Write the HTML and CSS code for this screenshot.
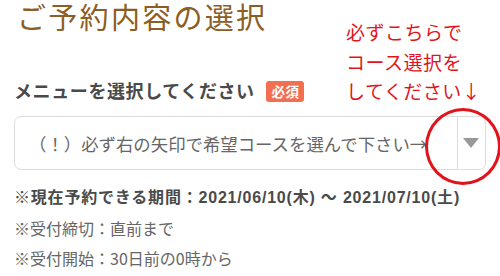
FILE: index.html
```html
<!DOCTYPE html>
<html lang="ja">
  <head>
    <meta charset="UTF-8" />
    <title>ご予約内容の選択</title>
    <link rel="stylesheet" href="styles.css">
  </head>
  <body>
    <div class="page">
      <h1 class="title">ご予約内容の選択</h1>

      <div class="note-hand">
        必ずこちらで<br />
        コース選択を<br />
        してください↓
      </div>

      <div class="form-group">
        <div class="label">
          メニューを選択してください <span class="required">必須</span>
        </div>
        <div class="select">
          <span class="select-text">（！）必ず右の矢印で希望コースを選んで下さい→</span>
          <span class="select-arrow"><span class="triangle"></span></span>
        </div>
        <div class="circle"></div>
      </div>

      <p class="period">※現在予約できる期間：2021/06/10(木) ～ 2021/07/10(土)</p>
      <p class="info">※受付締切：直前まで</p>
      <p class="info">※受付開始：30日前の0時から</p>
    </div>
  </body>
</html>
```

FILE: styles.css
```css
body {
  margin: 0;
  background: #fff;
  font-family: "Noto Sans CJK JP", "Noto Sans", sans-serif;
  color: #444;
}
.page {
  position: relative;
  width: 500px;
  height: 276px;
  overflow: hidden;
  padding: 0 14px;
  box-sizing: border-box;
}
.title {
  margin: 0;
  padding-left: 3px;
  font-size: 29px;
  font-weight: normal;
  line-height: 32px;
  color: #8c5d24;
  letter-spacing: 2.3px;
}
.note-hand {
  position: absolute;
  left: 346px;
  top: 17px;
  font-size: 19px;
  line-height: 29.5px;
  color: #e1141b;
  letter-spacing: 0.5px;
}
.form-group {
  position: relative;
  margin-top: 45px;
}
.label {
  font-size: 18px;
  font-weight: bold;
  line-height: 26px;
  color: #4a4a4a;
  letter-spacing: 0.6px;
}
.required {
  display: inline-block;
  margin-left: 7px;
  padding: 0 5px;
  background: #f36f50;
  color: #fff;
  font-size: 13.5px;
  line-height: 21px;
  border-radius: 3px;
  vertical-align: 1px;
  letter-spacing: 0.5px;
}
.select {
  display: flex;
  align-items: stretch;
  margin-top: 13px;
  height: 54px;
  width: 472px;
  border: 1px solid #ddd;
  border-radius: 7px;
  box-sizing: border-box;
}
.select-text {
  flex: 1;
  display: flex;
  align-items: center;
  padding-left: 14px;
  font-size: 17.4px;
  color: #666;
  white-space: nowrap;
}
.select-arrow {
  width: 27px;
  border-left: 1px solid #ddd;
  display: flex;
  align-items: center;
  justify-content: center;
}
.triangle {
  width: 0;
  height: 0;
  border-left: 8px solid transparent;
  border-right: 8px solid transparent;
  border-top: 10px solid #999;
  margin-left: -2px;
}
.circle {
  position: absolute;
  left: 411px;
  top: 31px;
  width: 70px;
  height: 71px;
  border: 3px solid #e1141b;
  border-radius: 50%;
}
.period {
  margin: 18px 0 0;
  font-family: "Liberation Sans", "Noto Sans CJK JP", sans-serif;
  font-size: 16px;
  font-weight: bold;
  line-height: 20px;
  color: #4a4a4a;
  letter-spacing: 0.8px;
}
.info {
  margin: 10px 0 0;
  font-size: 16px;
  line-height: 20px;
  color: #666;
}
```
